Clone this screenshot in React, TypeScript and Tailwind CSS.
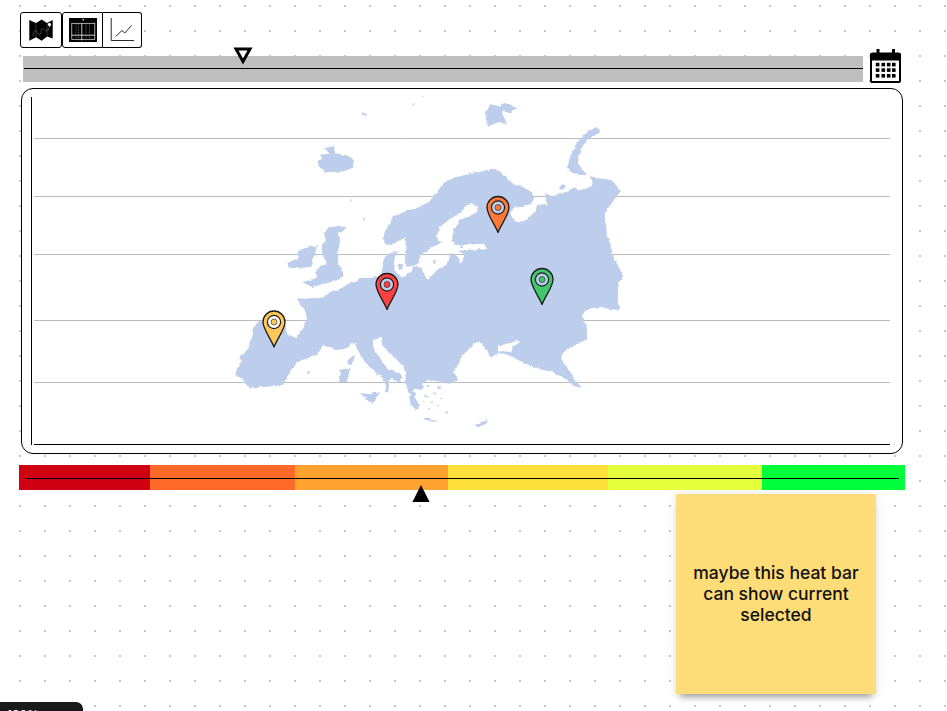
import React from "react";

const LAND = "#bdcdec";

const mainland =
  "M250 388 L244 381 L235 375 L238 367 L242 360 L239 358 L248 350 L250 342 L253 335 L253 328 L258 322 L263 319 L275 321 L285 322 L287 334 L296 338 L303 329 L307 318 L305 310 L299 303 L296 298 L303 299 L312 298 L318 297 L322 298 L330 293 L338 290 L350 283 L356 282 L360 278 L370 278 L376 277 L381 274 L383 267 L383 262 L385 257 L391 253 L398 251 L395 257 L393 263 L395 269 L397 273 L402 278 L408 274 L412 271 L413 266 L422 268 L425 276 L428 280 L433 274 L437 270 L446 265 L448 260 L451 254 L455 255 L459 258 L460 264 L463 260 L464 254 L458 251 L470 250 L487 249 L484 244 L475 244 L462 245 L455 245 L452 241 L453 230 L460 220 L470 216 L477 212 L478 206 L472 204 L467 205 L461 212 L450 219 L440 227 L436 235 L437 240 L443 243 L437 245 L431 248 L427 251 L422 254 L420 258 L418 264 L412 266 L407 267 L405 262 L405 250 L406 238 L400 240 L393 245 L385 244 L383 238 L385 231 L390 223 L393 216 L400 214 L407 210 L415 209 L427 203 L433 197 L437 192 L443 184 L449 180 L453 178 L461 176 L470 173 L480 172 L487 170 L495 170 L500 171 L505 176 L510 182 L518 185 L523 187 L530 191 L535 197 L531 204 L523 207 L515 206 L510 213 L513 219 L517 222 L524 221 L530 217 L536 211 L537 205 L547 204 L546 197 L545 192 L552 197 L560 193 L566 192 L573 188 L580 190 L590 187 L592 183 L590 176 L597 178 L605 179 L612 180 L617 186 L620 192 L614 200 L608 207 L605 213 L605 225 L608 238 L612 250 L612 255 L618 265 L623 277 L619 283 L618 288 L618 300 L619 310 L610 309 L600 307 L592 308 L585 311 L582 316 L585 322 L587 330 L587 340 L578 343 L568 349 L563 353 L561 358 L564 364 L568 369 L572 376 L577 382 L582 388 L574 386 L567 380 L560 376 L553 372 L543 370 L533 367 L523 362 L513 357 L505 354 L498 353 L490 358 L488 352 L483 346 L482 342 L476 342 L472 346 L463 355 L460 362 L456 367 L453 372 L456 377 L459 380 L450 383 L442 382 L436 381 L430 380 L425 381 L422 384 L424 387 L420 391 L417 388 L413 390 L416 394 L414 397 L419 404 L418 410 L414 408 L410 403 L410 397 L412 395 L408 391 L405 382 L407 373 L402 365 L396 359 L390 353 L385 348 L382 345 L382 338 L377 339 L373 340 L373 346 L376 352 L380 358 L384 364 L387 368 L394 371 L400 373 L402 377 L399 383 L395 380 L392 378 L388 380 L389 386 L388 393 L385 392 L386 386 L383 378 L378 375 L373 370 L368 365 L362 358 L358 351 L355 344 L351 343 L349 347 L344 349 L337 350 L330 347 L323 345 L320 350 L317 355 L308 358 L297 362 L293 368 L290 372 L286 379 L283 385 L275 386 L263 387 L256 387 Z";

const islands = [
  "M317 161 L322 159 L321 154 L330 154 L324 148 L335 146 L335 153 L342 155 L352 158 L354 160 L352 168 L345 171 L337 172 L325 172 L321 168 Z",
  "M485 112 L490 104 L495 105 L498 107 L505 103 L512 105 L517 108 L510 113 L502 111 L504 117 L507 124 L499 122 L493 125 L487 127 Z",
  "M567 168 L570 158 L573 150 L577 143 L583 135 L590 130 L597 127 L600 131 L594 136 L587 140 L582 147 L578 157 L579 165 L587 175 L578 175 L573 173 Z",
  "M560 187 L563 184 L566 186 L565 189 L561 190 Z",
  "M330 227 L339 226 L347 227 L342 231 L338 235 L340 241 L339 248 L337 255 L338 262 L341 268 L343 277 L338 280 L330 282 L320 285 L312 287 L302 282 L310 280 L317 277 L316 271 L320 266 L327 263 L324 258 L322 253 L322 245 L326 240 L324 233 Z",
  "M298 250 L306 248 L318 245 L316 252 L313 258 L312 263 L310 267 L300 268 L290 268 L287 263 L293 260 L298 258 Z",
  "M347 368 L350 368 L349 374 L347 382 L340 382 L339 376 L341 370 Z",
  "M351 357 L355 355 L354 360 L351 365 L347 363 L349 359 Z",
  "M360 393 L368 394 L380 392 L377 397 L374 402 L372 404 L366 399 Z",
  "M422 417 L428 418 L438 421 L434 422 L426 420 Z",
  "M475 425 L482 422 L488 420 L485 425 L477 427 Z",
  "M398 265 L402 264 L403 269 L399 270 Z",
  "M306 372 L309 371 L310 373 L307 374 Z",
  "M361 114 L363 112 L367 114 L366 116 L362 116 Z",
  "M412 104 L415 103 L414 106 Z M420 98 L424 96 L423 98 Z",
  "M351 200 L353 199 L352 202 Z M350 203 L351 202 L350 204 Z M363 219 L365 217 L364 222 Z M400 141 L404 140 L403 141 Z",
  "M447 265 L452 262 L453 264 L448 267 Z M456 241 L459 240 L458 243 Z M433 262 L436 259 L435 264 Z",
  "M425 396 L428 395 L427 398 Z M430 402 L432 401 L431 404 Z M423 402 L425 402 L424 404 Z M433 393 L436 392 L436 395 Z M436 404 L438 404 L437 406 Z M440 398 L442 398 L441 400 Z M428 408 L430 408 L429 410 Z M437 412 L439 412 L438 414 Z M445 412 L448 411 L447 415 Z M426 386 L429 385 L429 388 Z M436 387 L440 386 L439 389 Z M433 410 L434 410 L434 412 Z",
];

const holes = "M498 346 L506 344 L520 340 L514 346 L510 352 L503 351 L498 352 Z M459 246 L463 245 L461 248 Z";

function Pin({ x, y, color, inner }: { x: number; y: number; color: string; inner: string }) {
  return (
    <g transform={`translate(${x} ${y})`}>
      <path
        d="M0 25 C-2.5 18 -11 7 -11 0 A11 11 0 1 1 11 0 C11 7 2.5 18 0 25 Z"
        fill={color}
        stroke="#1c1c1c"
        strokeWidth="1.3"
        strokeLinejoin="round"
      />
      <circle r="6.6" fill={inner} stroke="#1c1c1c" strokeWidth="1.2" />
      <circle r="3" fill={color} stroke="#1c1c1c" strokeWidth="0.6" />
    </g>
  );
}

function MapIcon() {
  return (
    <svg width="24" height="22" viewBox="29 19 24 22" className="block">
      <path d="M29.3 20 L36 23 L41.7 19.5 L47 23 L52.7 20 L52.7 38.5 L47 36.5 L41.7 40.7 L36 37.3 L29.3 40.7 Z" fill="#000" />
      <path d="M36 23 V37.3 M47 23 V36.5" stroke="#555" strokeWidth="0.6" />
      <path d="M33 36 C33 30 37 30 38 33 C39 36 41 35 41 31 C41 28 44 28 45 30 C46 32 48 31 49 27" fill="none" stroke="#999" strokeWidth="0.6" strokeDasharray="1.2 0.6" />
      <path d="M49.5 27 C48 25.5 47.5 24.5 48 23.6 C49 22.6 51 23 51 24.4 C51 25.3 50 26.4 49.5 27 Z" fill="#fff" />
    </svg>
  );
}

function TableIcon() {
  return (
    <svg width="28" height="24" viewBox="69 18 28 24" className="block">
      <rect x="69" y="18" width="28" height="24" fill="#000" />
      <rect x="82.5" y="19" width="1.4" height="1.4" fill="#fff" />
      <rect x="71.8" y="23.3" width="23" height="16" fill="none" stroke="#eee" strokeWidth="0.7" />
      <path d="M71.8 35.2 H94.8" stroke="#fff" strokeWidth="0.8" />
      <path d="M81.8 23.3 V40.5" stroke="#eee" strokeWidth="0.8" />
      <path d="M76 24 V40.5 M78.5 24 V40.5 M86 24 V40.5 M89.5 24 V40.5" stroke="#888" strokeWidth="0.6" strokeDasharray="1.5 1" />
    </svg>
  );
}

function ChartIcon() {
  return (
    <svg width="24" height="24" viewBox="108 19 24 24" className="block">
      <path d="M109.2 19 V41.5 H132" fill="none" stroke="#111" strokeWidth="0.9" />
      <path d="M113.5 37.5 L120 31.5 L122.8 34 L129.5 26.5" fill="none" stroke="#111" strokeWidth="0.9" />
    </svg>
  );
}

function CalendarIcon() {
  const xs = [875.8, 881.5, 886.9, 892];
  const ys = [62.8, 68.3, 74];
  return (
    <svg width="31" height="34" viewBox="870 49 31 34" className="block">
      <rect x="871" y="53.6" width="29" height="28.4" rx="1.6" fill="#fff" stroke="#000" strokeWidth="2" />
      <rect x="870" y="53" width="31" height="7.5" rx="1.5" fill="#000" />
      <rect x="876.5" y="49" width="3" height="6" fill="#000" />
      <rect x="892" y="49" width="3" height="6" fill="#000" />
      {ys.map((y) =>
        xs.map((x) => <rect key={`${x}-${y}`} x={x} y={y} width="3.6" height="3.6" fill="#000" />)
      )}
    </svg>
  );
}

const segments = [
  { w: "w-[131px]", c: "bg-[#d00012]" },
  { w: "w-[145px]", c: "bg-[#ff6a28]" },
  { w: "w-[153px]", c: "bg-[#ffa230]" },
  { w: "w-[160px]", c: "bg-[#ffdf3a]" },
  { w: "w-[154px]", c: "bg-[#e4ff3c]" },
  { w: "w-[143px]", c: "bg-[#00ff3a]" },
];

export default function App() {
  return (
    <div className="relative flex h-[711px] w-[947px] flex-col overflow-hidden bg-white bg-[radial-gradient(circle_at_20px_6px,#c6c6c6_1.1px,transparent_1.5px)] bg-[length:25px_25px] font-['Inter',sans-serif]">
      {/* toolbar */}
      <div className="ml-[20px] mt-[12px] flex h-[36px] w-[122px]">
        <div className="flex w-[42px] items-center justify-center rounded-[3px] border border-black bg-white">
          <MapIcon />
        </div>
        <div className="flex w-[41px] items-center justify-center rounded-l-[3px] border border-black bg-white">
          <TableIcon />
        </div>
        <div className="flex flex-1 items-center justify-center rounded-r-[3px] border-y border-r border-black bg-white">
          <ChartIcon />
        </div>
      </div>

      {/* timeline */}
      <div className="relative ml-[23px] mt-[1px] flex w-[878px] items-start gap-[7px]">
        <div className="mt-[7px] h-[26px] w-[840px] bg-[#bfbfbf] pl-px pt-[12px]">
          <div className="h-px w-full bg-black" />
        </div>
        <CalendarIcon />
        <svg width="20" height="18" viewBox="233 46.5 20 18" className="absolute left-[210px] top-[-2.5px]">
          <polygon points="236,48.5 250,48.5 243,61" fill="#fff" stroke="#000" strokeWidth="3" strokeLinejoin="miter" />
        </svg>
      </div>

      {/* map panel */}
      <div className="relative ml-[21px] mt-[5px] box-border h-[366px] w-[882px] rounded-[12px] border border-black bg-white pl-[9px] pt-[8px]">
        <div className="flex h-[348px] w-[858px] flex-col border-l border-black pl-[2px]">
          <div className="mt-[41px] h-px w-[856px] bg-[#bbbbbb]" />
          <div className="mt-[57px] h-px w-[856px] bg-[#bbbbbb]" />
          <div className="mt-[57px] h-px w-[856px] bg-[#bbbbbb]" />
          <div className="mt-[65px] h-px w-[856px] bg-[#bbbbbb]" />
          <div className="mt-[61px] h-px w-[856px] bg-[#bbbbbb]" />
          <div className="mt-[61px] h-px w-[856px] bg-black" />
        </div>
        <svg
          width="880"
          height="364"
          viewBox="22 89 880 364"
          className="absolute left-0 top-0"
        >
          <defs>
            <filter id="coast" x="0" y="0" width="100%" height="100%" filterUnits="objectBoundingBox">
              <feTurbulence type="fractalNoise" baseFrequency="0.22" numOctaves="2" seed="4" result="n" />
              <feDisplacementMap in="SourceGraphic" in2="n" scale="3.5" xChannelSelector="R" yChannelSelector="G" />
            </filter>
          </defs>
          <g filter="url(#coast)">
            <path d={`${mainland} ${holes}`} fill={LAND} fillRule="evenodd" />
            {islands.map((d, i) => (
              <path key={i} d={d} fill={LAND} />
            ))}
          </g>
          <Pin x={498} y={207.5} color="#ff7a38" inner={LAND} />
          <Pin x={387} y={284.5} color="#ff4141" inner={LAND} />
          <Pin x={274} y={322} color="#ffc857" inner="#ffffff" />
          <Pin x={542} y={279.5} color="#43c76c" inner={LAND} />
        </svg>
      </div>

      {/* heat bar */}
      <div className="relative ml-[19px] mt-[11px] flex h-[25px] w-[886px]">
        {segments.map((s) => (
          <div key={s.c} className={`h-full ${s.w} ${s.c}`} />
        ))}
        <div className="absolute left-[6px] top-[13px] h-px w-[874px] bg-black" />
        <svg width="18" height="18" viewBox="0 0 18 18" className="absolute left-[392.5px] top-[20px]">
          <polygon points="9,0 17.6,17 0.4,17" fill="#000" />
        </svg>
      </div>

      {/* sticky note */}
      <div className="ml-[676px] mt-[4px] flex h-[200px] w-[200px] items-center justify-center bg-[#fedc78] px-[14px] pb-px text-center text-[17.5px] font-medium leading-[21px] text-[#111] shadow-[0_7px_7px_-4px_rgba(0,0,0,0.35),0_0_10px_rgba(0,0,0,0.1)]">
        <p>maybe this heat bar can show current selected</p>
      </div>

      {/* zoom pill */}
      <div className="absolute bottom-0 left-0 h-[9px] w-[83px] overflow-hidden rounded-tr-[7px] bg-[#1a1a1a] pl-[7px] pt-[6px] text-[12px] leading-[14px] text-white">
        100%
      </div>
    </div>
  );
}
